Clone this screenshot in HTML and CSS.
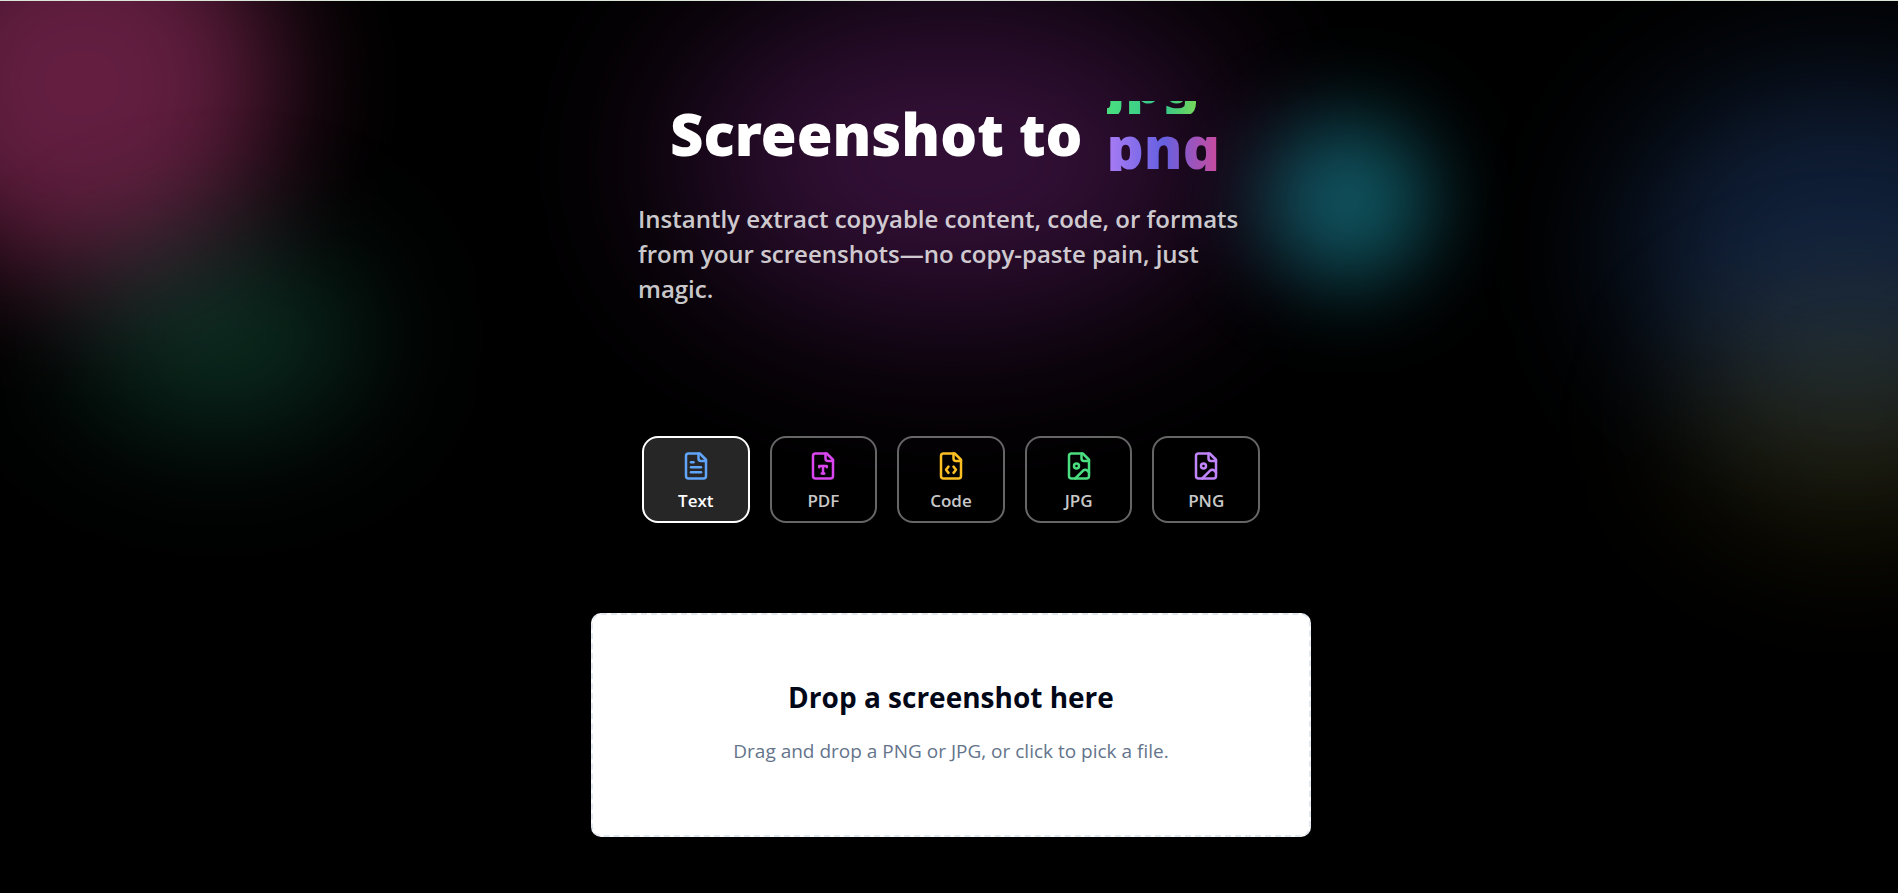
FILE: index.html
```html
<!DOCTYPE html>
<html lang="en">
<head>
    <meta charset="UTF-8">
    <title>Screenshot to anything</title>
    <link rel="stylesheet" href="styles.css">
</head>
<body>
    <div class="page">
        <div class="glow">
            <div class="blob pink"></div>
            <div class="blob purple"></div>
            <div class="blob cyan"></div>
            <div class="blob green"></div>
            <div class="blob blue"></div>
            <div class="blob yellow"></div>
        </div>

        <main class="content">
            <header class="hero">
                <h1 class="title">
                    <span>Screenshot to</span>
                    <span class="rotator">
                        <span class="track">
                            <span class="word word-jpg">jpg</span>
                            <span class="word word-png">png</span>
                        </span>
                    </span>
                </h1>
                <p class="subtitle">Instantly extract copyable content, code, or formats from your screenshots—no copy-paste pain, just magic.</p>
            </header>

            <div class="formats">
                <button type="button" class="format active">
                    <svg class="icon icon-text" viewBox="0 0 24 24">
                        <path d="M15 2H6a2 2 0 0 0-2 2v16a2 2 0 0 0 2 2h12a2 2 0 0 0 2-2V7Z"/>
                        <path d="M14 2v4a2 2 0 0 0 2 2h4"/>
                        <path d="M10 9H8"/>
                        <path d="M16 13H8"/>
                        <path d="M16 17H8"/>
                    </svg>
                    Text
                </button>
                <button type="button" class="format">
                    <svg class="icon icon-pdf" viewBox="0 0 24 24">
                        <path d="M15 2H6a2 2 0 0 0-2 2v16a2 2 0 0 0 2 2h12a2 2 0 0 0 2-2V7Z"/>
                        <path d="M14 2v4a2 2 0 0 0 2 2h4"/>
                        <path d="M9 13v-1h6v1"/>
                        <path d="M12 12v6"/>
                        <path d="M11 18h2"/>
                    </svg>
                    PDF
                </button>
                <button type="button" class="format">
                    <svg class="icon icon-code" viewBox="0 0 24 24">
                        <path d="M15 2H6a2 2 0 0 0-2 2v16a2 2 0 0 0 2 2h12a2 2 0 0 0 2-2V7Z"/>
                        <path d="M14 2v4a2 2 0 0 0 2 2h4"/>
                        <path d="M10 12.5 8 15l2 2.5"/>
                        <path d="m14 12.5 2 2.5-2 2.5"/>
                    </svg>
                    Code
                </button>
                <button type="button" class="format">
                    <svg class="icon icon-jpg" viewBox="0 0 24 24">
                        <path d="M15 2H6a2 2 0 0 0-2 2v16a2 2 0 0 0 2 2h12a2 2 0 0 0 2-2V7Z"/>
                        <path d="M14 2v4a2 2 0 0 0 2 2h4"/>
                        <circle cx="10" cy="12" r="2"/>
                        <path d="m20 17-1.296-1.296a2.41 2.41 0 0 0-3.408 0L9 22"/>
                    </svg>
                    JPG
                </button>
                <button type="button" class="format">
                    <svg class="icon icon-png" viewBox="0 0 24 24">
                        <path d="M15 2H6a2 2 0 0 0-2 2v16a2 2 0 0 0 2 2h12a2 2 0 0 0 2-2V7Z"/>
                        <path d="M14 2v4a2 2 0 0 0 2 2h4"/>
                        <circle cx="10" cy="12" r="2"/>
                        <path d="m20 17-1.296-1.296a2.41 2.41 0 0 0-3.408 0L9 22"/>
                    </svg>
                    PNG
                </button>
            </div>

            <button type="button" class="dropzone">
                <span class="drop-title">Drop a screenshot here</span>
                <span class="drop-text">Drag and drop a PNG or JPG, or click to pick a file.</span>
            </button>
        </main>
    </div>
</body>
</html>
```
FILE: styles.css
```css
* {
    box-sizing: border-box;
}
body {
    margin: 0;
    background-color: #000;
    color: #fff;
    font-family: "Segoe UI", "Open Sans", "Noto Sans", sans-serif;
}
.page {
    position: relative;
    min-height: 100vh;
    overflow: hidden;
    border-top: 1px solid #dbe5d8;
}

/* background glow */
.glow {
    position: absolute;
    inset: 0;
}
.blob {
    position: absolute;
    border-radius: 50%;
    filter: blur(64px);
}
.pink {
    left: -112px;
    top: -110px;
    width: 388px;
    height: 384px;
    background-color: rgba(236, 72, 153, 0.42);
}
.purple {
    left: 50%;
    top: 0;
    width: 550px;
    height: 320px;
    margin-left: -272px;
    background-color: rgba(192, 58, 205, 0.28);
    filter: blur(88px);
}
.cyan {
    left: 71%;
    top: 118px;
    width: 168px;
    height: 164px;
    margin-left: -84px;
    background-color: rgba(34, 190, 215, 0.46);
    filter: blur(44px);
}
.green {
    left: 74px;
    top: 240px;
    width: 292px;
    height: 190px;
    background-color: rgba(38, 150, 110, 0.3);
}
.blue {
    right: -160px;
    top: 80px;
    width: 430px;
    height: 340px;
    background-color: rgba(59, 115, 210, 0.28);
    filter: blur(72px);
}
.yellow {
    right: -130px;
    top: 290px;
    width: 350px;
    height: 250px;
    background-color: rgba(180, 165, 40, 0.14);
}

.content {
    position: relative;
    display: flex;
    flex-direction: column;
    align-items: center;
    padding: 100px 16px 56px 20px;
}

/* hero */
.hero {
    display: flex;
    flex-direction: column;
    align-items: center;
    gap: 30px;
    width: 100%;
    max-width: 626px;
}
.title {
    display: flex;
    justify-content: center;
    gap: 24px;
    margin: 0;
    font-family: "Segoe UI", "Noto Sans", sans-serif;
    font-size: 58px;
    font-weight: 900;
    line-height: 66px;
    white-space: nowrap;
}
.rotator {
    height: 70px;
    padding-right: 12px;
    overflow: hidden;
}
.track {
    display: flex;
    flex-direction: column;
    transform: translateY(-53px);
}
.word {
    color: transparent;
    background-clip: text;
    -webkit-background-clip: text;
}
.word-jpg {
    background-image: linear-gradient(90deg, #4ade80, #34c68c, #a3e635);
}
.word-png {
    background-image: linear-gradient(90deg, #a97cf5, #6560e0, #cc4a9c);
}
.subtitle {
    margin: 0;
    color: rgba(255, 255, 255, 0.8);
    font-size: 24px;
    font-weight: 600;
    line-height: 35px;
}

/* format buttons */
.formats {
    display: grid;
    grid-template-columns: repeat(5, 1fr);
    gap: 20px;
    width: 100%;
    max-width: 618px;
    margin-top: 130px;
}
.format {
    display: flex;
    flex-direction: column;
    align-items: center;
    gap: 8px;
    padding: 13px 8px 9px;
    border: 2px solid rgba(255, 255, 255, 0.4);
    border-radius: 16px;
    background-color: transparent;
    color: rgba(255, 255, 255, 0.8);
    font-family: inherit;
    font-size: 17px;
    font-weight: 600;
    line-height: 23px;
    cursor: pointer;
}
.format.active {
    border-color: #fff;
    background-color: rgba(255, 255, 255, 0.15);
    color: #fff;
}
.icon {
    width: 30px;
    height: 30px;
    fill: none;
    stroke: currentColor;
    stroke-width: 2;
    stroke-linecap: round;
    stroke-linejoin: round;
}
.icon-text {
    color: #60a5fa;
}
.icon-pdf {
    color: #d946ef;
}
.icon-code {
    color: #fbbf24;
}
.icon-jpg {
    color: #4ade80;
}
.icon-png {
    color: #c084fc;
}

/* upload card */
.dropzone {
    display: flex;
    flex-direction: column;
    align-items: center;
    gap: 20px;
    width: 100%;
    max-width: 720px;
    margin-top: 90px;
    padding: 62px 24px 70px;
    border: 2px dashed #e2e8f0;
    border-radius: 10px;
    background-color: #fff;
    font-family: inherit;
    cursor: pointer;
}
.drop-title {
    color: #020817;
    font-size: 28px;
    font-weight: 700;
    line-height: 40px;
}
.drop-text {
    color: #64748b;
    font-size: 19px;
    line-height: 28px;
}
```
